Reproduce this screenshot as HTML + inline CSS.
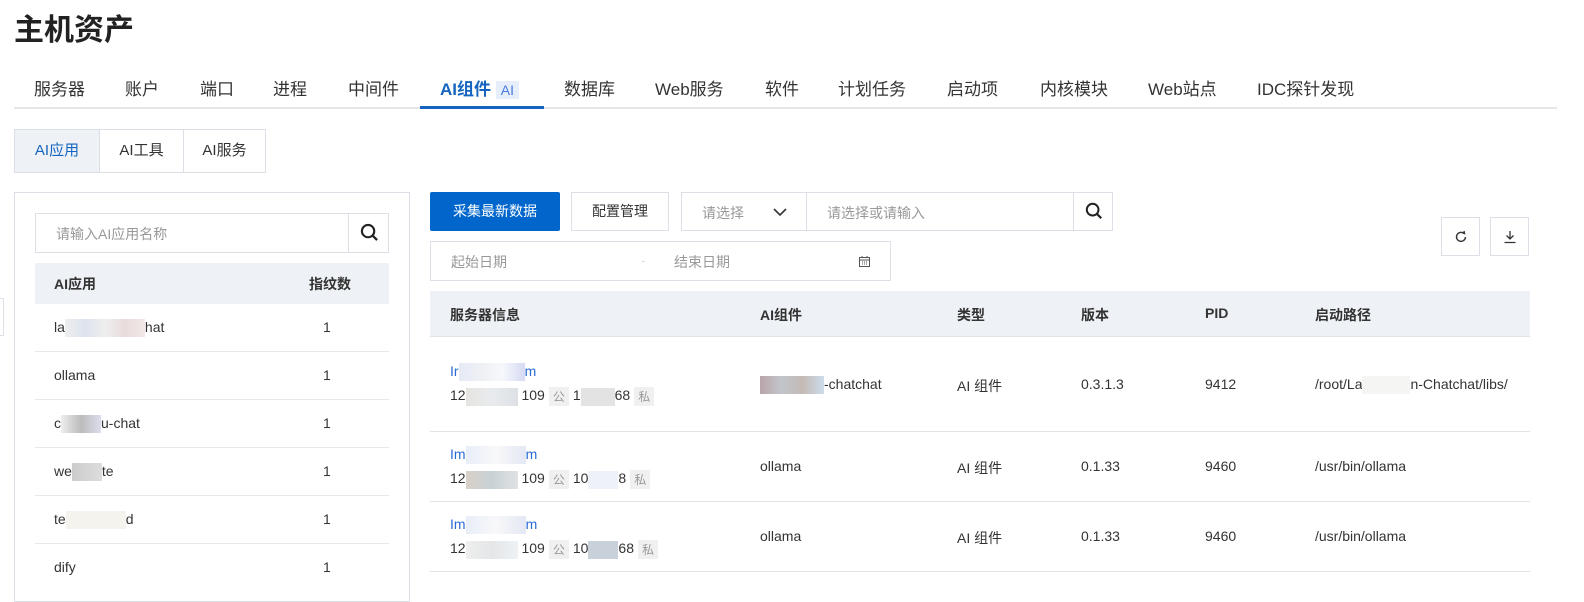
<!DOCTYPE html>
<html><head><meta charset="utf-8"><style>
*{box-sizing:border-box;margin:0;padding:0}
body{width:1584px;height:592px;overflow:hidden;background:#fff;font-family:"Liberation Sans","Noto Sans CJK SC",sans-serif;color:#333;position:relative;font-size:14px}
.a{position:absolute}
.title{left:14px;top:5px;font-size:30px;font-weight:bold;color:#222}
.tabs{left:14px;top:72px;width:1543px;height:37px;border-bottom:2px solid #e6e6e6}
.tab{position:absolute;top:3px;font-size:17px;color:#333;white-space:nowrap}
.b{border:1px solid #dcdfe6;background:#fff}
.ph{color:#999}
.blur{display:inline-block;height:18px;vertical-align:middle}
.tag{display:inline-block;background:#f0f0f0;color:#999;font-size:12px;padding:1px 4px;margin:0 4px;vertical-align:middle}
.lnk{color:#2a6ad6}
</style></head><body>
<div class="a title">主机资产</div>
<div class="a tabs">
<span class="tab" style="left:20px">服务器</span>
<span class="tab" style="left:111px">账户</span>
<span class="tab" style="left:186px">端口</span>
<span class="tab" style="left:259px">进程</span>
<span class="tab" style="left:334px">中间件</span>
<span class="tab" style="left:426px;color:#1565c0;font-weight:bold">AI组件 <span style="font-weight:normal;font-size:14px;background:#e6eefc;color:#4a7be0;padding:1px 5px">AI</span></span>
<span class="tab" style="left:550px">数据库</span>
<span class="tab" style="left:641px">Web服务</span>
<span class="tab" style="left:751px">软件</span>
<span class="tab" style="left:824px">计划任务</span>
<span class="tab" style="left:933px">启动项</span>
<span class="tab" style="left:1026px">内核模块</span>
<span class="tab" style="left:1134px">Web站点</span>
<span class="tab" style="left:1243px">IDC探针发现</span>
<div class="a" style="left:406px;top:34px;width:124px;height:3px;background:#1565c0"></div>
</div>
<div class="a b" style="left:14px;top:129px;width:252px;height:44px;display:flex;font-size:15px">
<div style="width:85px;background:#eef1f6;color:#1565c0;text-align:center;line-height:42px;border-right:1px solid #dcdfe6">AI应用</div>
<div style="width:84px;text-align:center;line-height:42px;border-right:1px solid #dcdfe6">AI工具</div>
<div style="flex:1;text-align:center;line-height:42px">AI服务</div>
</div>
<div class="a" style="left:0;top:298px;width:4px;height:38px;border:1px solid #dcdfe6;border-left:none"></div>
<div class="a b" style="left:14px;top:192px;width:396px;height:410px"></div>
<div class="a b" style="left:35px;top:213px;width:354px;height:40px"><span class="a ph" style="left:20px;top:10px">请输入AI应用名称</span>
<div class="a" style="left:312px;top:-1px;width:41px;height:40px;border-left:1px solid #dcdfe6"><svg class="a" style="left:11px;top:10px" width="19" height="19" viewBox="0 0 20 20"><circle cx="8.5" cy="8.5" r="6.5" fill="none" stroke="#222" stroke-width="2.2"/><path d="M13.5 13.5L18 18" stroke="#222" stroke-width="2.4"/></svg></div></div>
<div class="a" style="left:35px;top:263px;width:354px;height:41px;background:#eef1f6;font-weight:bold"><span class="a" style="left:19px;top:11px">AI应用</span><span class="a" style="left:274px;top:11px">指纹数</span></div>
<div class="a" style="left:35px;top:304px;width:354px">
<div style="height:48px;border-bottom:1px solid #e8e8e8;position:relative"><span class="a" style="left:19px;top:15px">la<span class="blur" style="width:80px;background:linear-gradient(90deg,#eee,#dde3ee,#eee,#e8dcdc,#f2e8e8)"></span>hat</span><span class="a" style="left:288px;top:15px">1</span></div>
<div style="height:48px;border-bottom:1px solid #e8e8e8;position:relative"><span class="a" style="left:19px;top:15px">ollama</span><span class="a" style="left:288px;top:15px">1</span></div>
<div style="height:48px;border-bottom:1px solid #e8e8e8;position:relative"><span class="a" style="left:19px;top:15px">c<span class="blur" style="width:40px;background:linear-gradient(90deg,#eee,#bbb,#dde)"></span>u-chat</span><span class="a" style="left:288px;top:15px">1</span></div>
<div style="height:48px;border-bottom:1px solid #e8e8e8;position:relative"><span class="a" style="left:19px;top:15px">we<span class="blur" style="width:30px;background:linear-gradient(90deg,#ccc,#ddd)"></span>te</span><span class="a" style="left:288px;top:15px">1</span></div>
<div style="height:48px;border-bottom:1px solid #e8e8e8;position:relative"><span class="a" style="left:19px;top:15px">te<span class="blur" style="width:60px;background:#f5f3ee"></span>d</span><span class="a" style="left:288px;top:15px">1</span></div>
<div style="height:48px;position:relative"><span class="a" style="left:19px;top:15px">dify</span><span class="a" style="left:288px;top:15px">1</span></div>
</div>
<div class="a" style="left:430px;top:192px;width:130px;height:39px;background:#0066cc;color:#fff;text-align:center;line-height:39px;border-radius:2px">采集最新数据</div>
<div class="a b" style="left:571px;top:192px;width:98px;height:39px;text-align:center;line-height:37px">配置管理</div>
<div class="a b" style="left:681px;top:192px;width:432px;height:39px">
<span class="a ph" style="left:20px;top:10px">请选择</span>
<svg class="a" style="left:90px;top:13px" width="16" height="12" viewBox="0 0 16 12"><path d="M2 3l6 6 6-6" fill="none" stroke="#333" stroke-width="1.6"/></svg>
<div class="a" style="left:124px;top:-1px;height:39px;border-left:1px solid #dcdfe6"></div>
<span class="a ph" style="left:145px;top:10px">请选择或请输入</span>
<div class="a" style="left:391px;top:-1px;width:40px;height:39px;border-left:1px solid #dcdfe6"><svg class="a" style="left:11px;top:10px" width="18" height="18" viewBox="0 0 20 20"><circle cx="8.5" cy="8.5" r="6.5" fill="none" stroke="#222" stroke-width="2.2"/><path d="M13.5 13.5L18 18" stroke="#222" stroke-width="2.4"/></svg></div>
</div>
<div class="a b" style="left:430px;top:241px;width:461px;height:40px">
<span class="a ph" style="left:20px;top:10px">起始日期</span><span class="a" style="left:210px;top:10px;color:#ddd">-</span><span class="a ph" style="left:243px;top:10px">结束日期</span>
<svg class="a" style="left:428px;top:14px" width="11" height="11" viewBox="0 0 11 11"><rect x="0.5" y="1.5" width="10" height="9" fill="none" stroke="#555"/><path d="M0.5 4h10M3 6h1M5 6h1M7 6h1M3 8h1M5 8h1M7 8h1M3 0v2M8 0v2" stroke="#555"/></svg>
</div>
<div class="a b" style="left:1441px;top:217px;width:39px;height:39px"><svg class="a" style="left:12px;top:12px" width="14" height="14" viewBox="0 0 14 14"><path d="M10 3.5A4.5 4.5 0 1 0 11.5 7" fill="none" stroke="#333" stroke-width="1.4"/><path d="M8 2.5l2.5 1 -0.5 -2.5" fill="none" stroke="#333" stroke-width="1.4"/></svg></div>
<div class="a b" style="left:1490px;top:217px;width:39px;height:39px"><svg class="a" style="left:12px;top:12px" width="14" height="14" viewBox="0 0 14 14"><path d="M7 1v8M3.5 5.5L7 9l3.5-3.5M1.5 12.5h11" fill="none" stroke="#333" stroke-width="1.3"/></svg></div>
<div class="a" style="left:430px;top:291px;width:1100px;height:46px;background:#eef1f6;border-bottom:1px solid #e3e3e3;font-weight:bold">
<span class="a" style="left:20px;top:14px">服务器信息</span><span class="a" style="left:330px;top:14px">AI组件</span><span class="a" style="left:527px;top:14px">类型</span><span class="a" style="left:651px;top:14px">版本</span><span class="a" style="left:775px;top:14px">PID</span><span class="a" style="left:885px;top:14px">启动路径</span></div>
<div class="a" style="left:430px;top:337px;width:1100px;height:95px;border-bottom:1px solid #e3e3e3">
<span class="a lnk" style="left:20px;top:26px">Ir<span class="blur" style="width:66px;background:linear-gradient(90deg,#e6eaf6,#eef0f4,#f6f8fc,#d6d9f2)"></span>m</span>
<span class="a" style="left:20px;top:50px">12<span class="blur" style="width:52px;background:linear-gradient(90deg,#e6e4e0,#e8ebee,#dde0e4)"></span> 109<span class="tag">公</span>1<span class="blur" style="width:34px;background:#e3e3e3"></span>68<span class="tag">私</span></span>
<span class="a" style="left:330px;top:39px"><span class="blur" style="width:64px;background:linear-gradient(90deg,#b9a4a8,#c1c6cc,#c4bab5,#cddcec)"></span>-chatchat</span>
<span class="a" style="left:527px;top:39px">AI 组件</span><span class="a" style="left:651px;top:39px">0.3.1.3</span><span class="a" style="left:775px;top:39px">9412</span><span class="a" style="left:885px;top:39px">/root/La<span class="blur" style="width:48px;background:#f5f5f3"></span>n-Chatchat/libs/</span></div>
<div class="a" style="left:430px;top:432px;width:1100px;height:70px;border-bottom:1px solid #e3e3e3">
<span class="a lnk" style="left:20px;top:14px">Im<span class="blur" style="width:60px;background:linear-gradient(90deg,#e8eef8,#f8f8fa,#e4e8f4)"></span>m</span>
<span class="a" style="left:20px;top:38px">12<span class="blur" style="width:52px;background:linear-gradient(90deg,#d8d0c8,#c8d2d6,#e0e2e4)"></span> 109<span class="tag">公</span>10<span class="blur" style="width:30px;background:#eef1f8"></span>8<span class="tag">私</span></span>
<span class="a" style="left:330px;top:26px">ollama</span><span class="a" style="left:527px;top:26px">AI 组件</span><span class="a" style="left:651px;top:26px">0.1.33</span><span class="a" style="left:775px;top:26px">9460</span><span class="a" style="left:885px;top:26px">/usr/bin/ollama</span></div>
<div class="a" style="left:430px;top:502px;width:1100px;height:70px;border-bottom:1px solid #e3e3e3">
<span class="a lnk" style="left:20px;top:14px">Im<span class="blur" style="width:60px;background:linear-gradient(90deg,#e8eef8,#f8f8fa,#e4e8f4)"></span>m</span>
<span class="a" style="left:20px;top:38px">12<span class="blur" style="width:52px;background:linear-gradient(90deg,#eee,#e4e6e8,#eef2f4)"></span> 109<span class="tag">公</span>10<span class="blur" style="width:30px;background:#c8d0da"></span>68<span class="tag">私</span></span>
<span class="a" style="left:330px;top:26px">ollama</span><span class="a" style="left:527px;top:26px">AI 组件</span><span class="a" style="left:651px;top:26px">0.1.33</span><span class="a" style="left:775px;top:26px">9460</span><span class="a" style="left:885px;top:26px">/usr/bin/ollama</span></div>
</body></html>
